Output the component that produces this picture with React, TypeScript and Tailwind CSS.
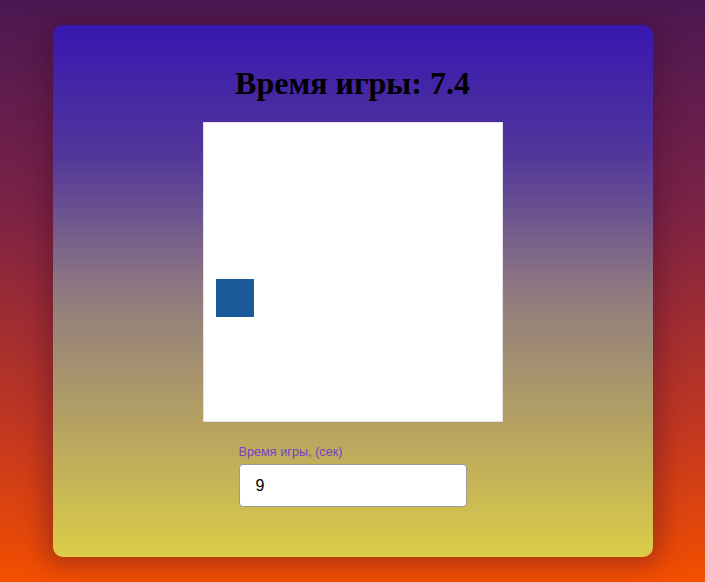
import React from "react";

export default function App() {
  return (
    <div className="min-h-[582px] w-full bg-[linear-gradient(to_bottom,#4b1853_0%,#7a2246_35%,#c4381f_75%,#f44f00_100%)] pt-[25px] pb-[25px]">
      <div className="mx-auto flex h-[532px] w-[600px] flex-col items-center rounded-[10px] bg-[linear-gradient(to_bottom,#3717b1_0%,#53379a_25%,#8f7a80_50%,#b5a262_75%,#dccd48_100%)] pt-[40px] shadow-[0_0_24px_8px_rgba(60,10,40,0.35)]">
        <h1 className="font-['Liberation_Serif',serif] text-[32px] font-bold leading-[37px] text-black">
          Время игры: 7.4
        </h1>
        <div className="relative mt-[20px] h-[300px] w-[300px] border border-[#e4e0ea] bg-white">
          <div className="absolute left-[12px] top-[156px] h-[38px] w-[38px] bg-[#1a5a9b]" />
        </div>
        <div className="mt-[23px] flex w-[228px] flex-col">
          <label className="font-['Liberation_Sans',sans-serif] text-[12.7px] leading-[14px] text-[#7b3fc6]">
            Время игры, (сек)
          </label>
          <input
            type="number"
            defaultValue={9}
            className="mt-[5px] h-[43px] w-[228px] rounded-[4px] border border-[#9a9a9a] bg-white px-[16px] font-['Liberation_Sans',sans-serif] text-[16px] text-black outline-none"
          />
        </div>
      </div>
    </div>
  );
}
